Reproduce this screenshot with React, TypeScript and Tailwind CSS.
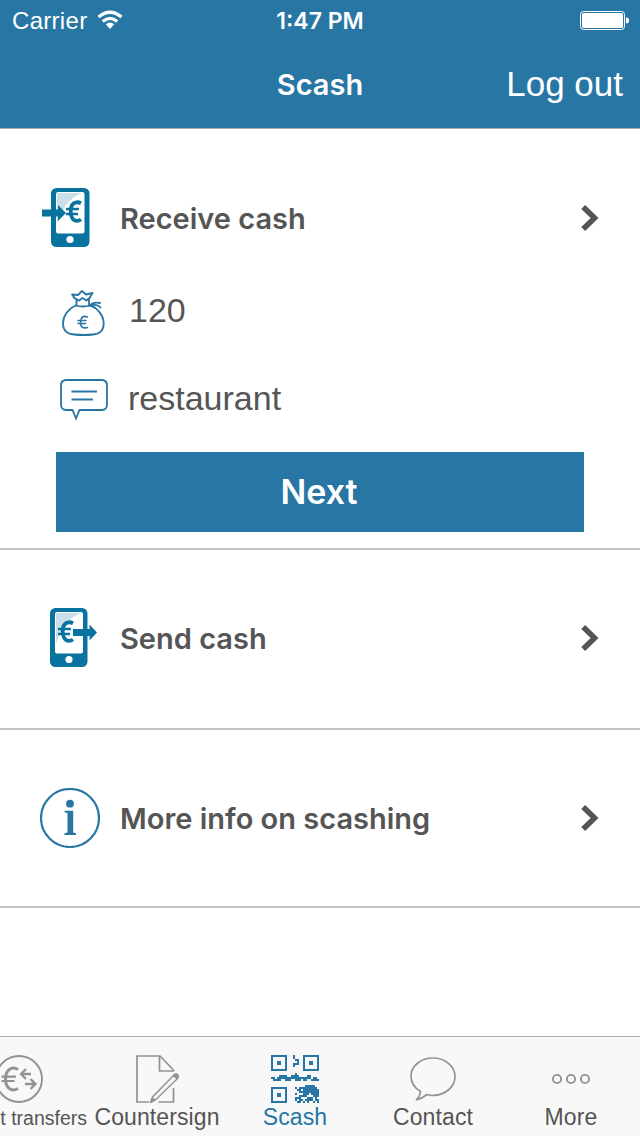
import type { ReactNode } from "react";
import { clsx } from "clsx";

const BLUE = "#2776a4";

// 24x24 modules, "#" is filled.
const QR = [
  "########...#....########",
  "#......#...#....#......#",
  "#......#....##..#......#",
  "#..##..#.....#..#..##..#",
  "#..##..#...###..#..##..#",
  "#......#...#....#......#",
  "#......#........#......#",
  "########........########",
  "........................",
  "............#...........",
  "....####..####....##....",
  "##.#################.##.",
  ".####..###..###.##..####",
  "........................",
  "........................",
  ".................#####..",
  "########....#.#########.",
  "#......#.....##.########",
  "#......#......##########",
  "#..##..#....#...###.####",
  "#..##..#......####...###",
  "#......#....###...###.#.",
  "#......#....#.##.####.##",
  "########.....##.#.#..#.#",
];

function PhoneIcon({ direction }: { direction: "in" | "out" }) {
  const incoming = direction === "in";
  return (
    <svg width="60" height="60" viewBox="0 0 60 60">
      <rect x={incoming ? 11 : 10} y="0" width={incoming ? 38.5 : 37.5} height="59" rx="5.5" fill="#08739f" />
      <rect x={incoming ? 16 : 15} y="4" width={incoming ? 28.5 : 28} height="41.5" rx="2" fill="#fff" />
      <path
        d={incoming ? "M17 5H42Q24 12 17 36Z" : "M16 5H41Q23 12 16 36Z"}
        fill="#c9dfea"
      />
      <circle cx={incoming ? 30 : 29} cy="51.5" r="3.6" fill="#fff" />
      <g transform={incoming ? "translate(26 12)" : "translate(18 12)"} fill="none" stroke="#08739f">
        <path d="M15 3.300Q12.500 2.100 10.500 2.300C6.500 2.800 4.700 6.400 4.700 11.300S6.500 20.800 11 20.800Q13 20.800 15 19.500" strokeWidth="3.800" />
        <path d="M0 9H13M0 14H12" strokeWidth="2.600" />
      </g>
      {incoming ? (
        <path d="M2 21.500H18V17L26 25L18 33V28.500H2Z" fill="#08739f" />
      ) : (
        <path d="M33 21H49.500V16.500L57 24.500L49.500 32.500V28H33Z" fill="#08739f" />
      )}
    </svg>
  );
}

function InfoIcon() {
  return (
    <svg width="60" height="60" viewBox="0 0 60 60">
      <circle cx="30" cy="30" r="29" fill="none" stroke={BLUE} strokeWidth="2.200" />
      <circle cx="30" cy="15.700" r="3.900" fill={BLUE} />
      <path d="M24.500 22.700H33.200V44.500L36 45.300V47H24.500V45.300L27.500 44.500V25L24.500 24.200Z" fill={BLUE} />
    </svg>
  );
}

function MoneyBagIcon() {
  return (
    <svg className="mt-[5px]" width="50" height="50" viewBox="0 0 50 50" fill="none" stroke={BLUE} strokeWidth="1.8" strokeLinejoin="round" strokeLinecap="round">
      <path d="M16.500 17.500C9 21 4 28 4 35.500C4 42.500 8.500 46 15 46.500Q25 47.500 34 46.500C41 46 44.700 42 44.700 35.500C44.700 28 39 20 31 17.500Q24 19.500 16.500 17.500Z" />
      <path d="M17.500 17.500V12L13 6.500L19 7L23 3L27 6.500L33.500 5L30 11V17.500M14.500 9.500L20 12.500L23.500 10L27.500 12.500L31 9.500" />
      <path d="M31 17.500Q34 13.500 41 15M31 17.500Q38 15.500 41.500 19.500M31 17.500Q34 18 36 20" />
      <path d="M28.500 29Q22 26.500 21.500 34Q21.500 41.500 28.500 39.500M19 32.500H27M19 35.500H26.500" strokeWidth="1.600" />
    </svg>
  );
}

function MessageIcon() {
  return (
    <svg className="mt-px" width="50" height="50" viewBox="0 0 50 50" fill="none" stroke={BLUE} strokeWidth="1.8">
      <path d="M7.500 6H42.500Q48 6 48 11.500V30.500Q48 36 42.500 36H20.500L17 44.500L13.500 36H7.500Q2 36 2 30.500V11.500Q2 6 7.500 6Z" />
      <path d="M12.500 17.500H38M12.500 25.500H34" />
    </svg>
  );
}

function Chevron() {
  return (
    <svg width="18" height="26" viewBox="0 0 18 26" fill="none" stroke="#555" strokeWidth="5.500">
      <path d="M2.200 2L13.600 13L2.200 24" />
    </svg>
  );
}

function QrIcon() {
  return (
    <svg width="48" height="48" viewBox="0 0 24 24" fill={BLUE} shapeRendering="crispEdges">
      {QR.flatMap((line, y) =>
        [...line].map((cell, x) =>
          cell === "#" ? <rect key={`${x}-${y}`} x={x} y={y} width="1" height="1" /> : null
        )
      )}
    </svg>
  );
}

function TransferIcon() {
  return (
    <svg width="48" height="48" viewBox="0 0 48 48" fill="none" stroke="#929292" strokeWidth="1.9">
      <circle cx="24" cy="24" r="23" />
      <path d="M23 14.500C16 10.500 10.500 15.500 10.500 24S16 37.500 23 33.500" strokeWidth="3" />
      <path d="M6.500 21.700H21M6.500 26H19.500" strokeWidth="2.200" />
      <path d="M36 19H26M31 14L26 19L31 24M30 29H40M35.500 24L40.500 29L35.500 34" strokeWidth="2.300" />
    </svg>
  );
}

function SignIcon() {
  return (
    <svg width="48" height="48" viewBox="0 0 48 48" fill="none" stroke="#929292" strokeWidth="1.700">
      <path d="M16 47H4V1H27L40.500 15V16H26.500V1M40.500 33V47H25.500" />
      <path d="M41 20L44.500 23.500L22.500 45L17.500 47.500L19.500 42Z" strokeWidth="1.500" />
      <path d="M40 20.500L42.500 18.500Q46.500 19 45.500 22.500L44 24ZM19.500 42.500L22.500 45L17.500 47.500Z" fill="#929292" strokeWidth="1" />
    </svg>
  );
}

function ContactIcon() {
  return (
    <svg width="48" height="48" viewBox="0 0 48 48" fill="none" stroke="#929292" strokeWidth="1.700">
      <path d="M11.500 36.500C5.500 33 2 27 2 21C2 11 12 3 24 3S46 11 46 21.500S36.500 40 24 40.500Q20.500 40.500 18 39.500Q12.500 44 7 45Q11 42 11.500 36.500Z" />
    </svg>
  );
}

function MoreIcon() {
  return (
    <svg width="48" height="48" viewBox="0 0 48 48" fill="none" stroke="#929292" strokeWidth="1.900">
      <circle cx="10" cy="24" r="4.100" />
      <circle cx="24" cy="24" r="4.100" />
      <circle cx="38" cy="24" r="4.100" />
    </svg>
  );
}

function StatusBar() {
  return (
    <div className="grid h-10 grid-cols-3 items-center">
      <div className="flex items-center gap-2.5 pl-3">
        <span className="pt-0.5 font-['Liberation_Sans',sans-serif] text-[24px] tracking-[0.3px]">Carrier</span>
        <svg width="26" height="20" viewBox="0 0 26 20" fill="none" stroke="#fff" strokeWidth="3.200">
          <path d="M1.500 7Q13 -2.500 24.500 7M5.700 11.500Q13 5.300 20.300 11.500" />
          <path d="M8.800 14.200Q13 11 17.200 14.200L13 19Z" fill="#fff" stroke="none" />
        </svg>
      </div>
      <span className="pt-0.5 text-center text-[23px] font-semibold">1:47 PM</span>
      <svg className="mt-px mr-[10px] justify-self-end" width="50" height="20" viewBox="0 0 50 20">
        <rect x="0.500" y="0.500" width="44" height="18" rx="3" fill="none" stroke="#fff" />
        <rect x="2" y="2" width="41" height="15" rx="1.500" fill="#fff" />
        <path d="M46 6.500Q49 6.500 49 9.500T46 12.500Z" fill="#fff" />
      </svg>
    </div>
  );
}

function ActionRow({ icon, label, className }: { icon: ReactNode; label: string; className?: string }) {
  return (
    <div className={clsx("flex items-center pr-[41px] pl-10", className)}>
      {icon}
      <span className="ml-5 flex-1 pt-0.5 text-[29px] font-semibold">{label}</span>
      <Chevron />
    </div>
  );
}

const TABS = [
  { label: "t transfers", icon: <TransferIcon /> },
  { label: "Countersign", icon: <SignIcon /> },
  { label: "Scash", icon: <QrIcon />, active: true },
  { label: "Contact", icon: <ContactIcon /> },
  { label: "More", icon: <MoreIcon /> },
];

export default function App() {
  return (
    <div className="flex h-[1136px] w-[640px] flex-col overflow-hidden bg-white font-['Inter','Liberation_Sans',sans-serif] text-[#555]">
      <header className="h-[129px] shrink-0 border-b border-[#a9a9a9] bg-[#2776a4] text-white">
        <StatusBar />
        <div className="grid h-[88px] grid-cols-3 items-center">
          <h1 className="col-start-2 pt-0.5 text-center text-[29px] font-semibold">Scash</h1>
          <button className="pt-px pr-[17px] text-right font-['Liberation_Sans',sans-serif] text-[35px]">
            Log out
          </button>
        </div>
      </header>

      <main className="flex-1">
        <section className="h-[421px] border-b-2 border-[#c4c4c4]">
          <ActionRow className="h-[137px] pt-[41px]" icon={<PhoneIcon direction="in" />} label="Receive cash" />
          <div className="flex h-[88px] items-center pl-[59px] font-['Liberation_Sans',sans-serif] text-[34px]">
            <MoneyBagIcon />
            <span className="ml-5">120</span>
          </div>
          <div className="flex h-[88px] items-center pl-[59px] font-['Liberation_Sans',sans-serif] text-[34px]">
            <MessageIcon />
            <span className="ml-[19px]">restaurant</span>
          </div>
          <button className="mx-14 mt-[10px] h-20 w-[528px] bg-[#2776a4] pr-0.5 pb-px text-[34px] font-semibold text-white">
            Next
          </button>
        </section>
        <ActionRow className="h-[180px] border-b-2 border-[#c4c4c4] pb-0.5" icon={<PhoneIcon direction="out" />} label="Send cash" />
        <ActionRow className="h-[178px] border-b-2 border-[#c4c4c4]" icon={<InfoIcon />} label="More info on scashing" />
      </main>

      <nav className="-ml-[50px] flex h-[100px] w-[690px] shrink-0 border-t border-[#a9a9a9] bg-[#f8f8f8] font-['Liberation_Sans',sans-serif]">
        {TABS.map((tab, i) => (
          <div
            key={tab.label}
            className={clsx("flex w-[138px] flex-col items-center pt-[18px]", tab.active && "text-[#2776a4]")}
          >
            {tab.icon}
            <span
              className={clsx(
                "leading-[28px] whitespace-nowrap",
                i === 0 ? "self-end pt-px pr-px text-[19.5px]" : "text-[23px] tracking-[0.1px]"
              )}
            >
              {tab.label}
            </span>
          </div>
        ))}
      </nav>
    </div>
  );
}
